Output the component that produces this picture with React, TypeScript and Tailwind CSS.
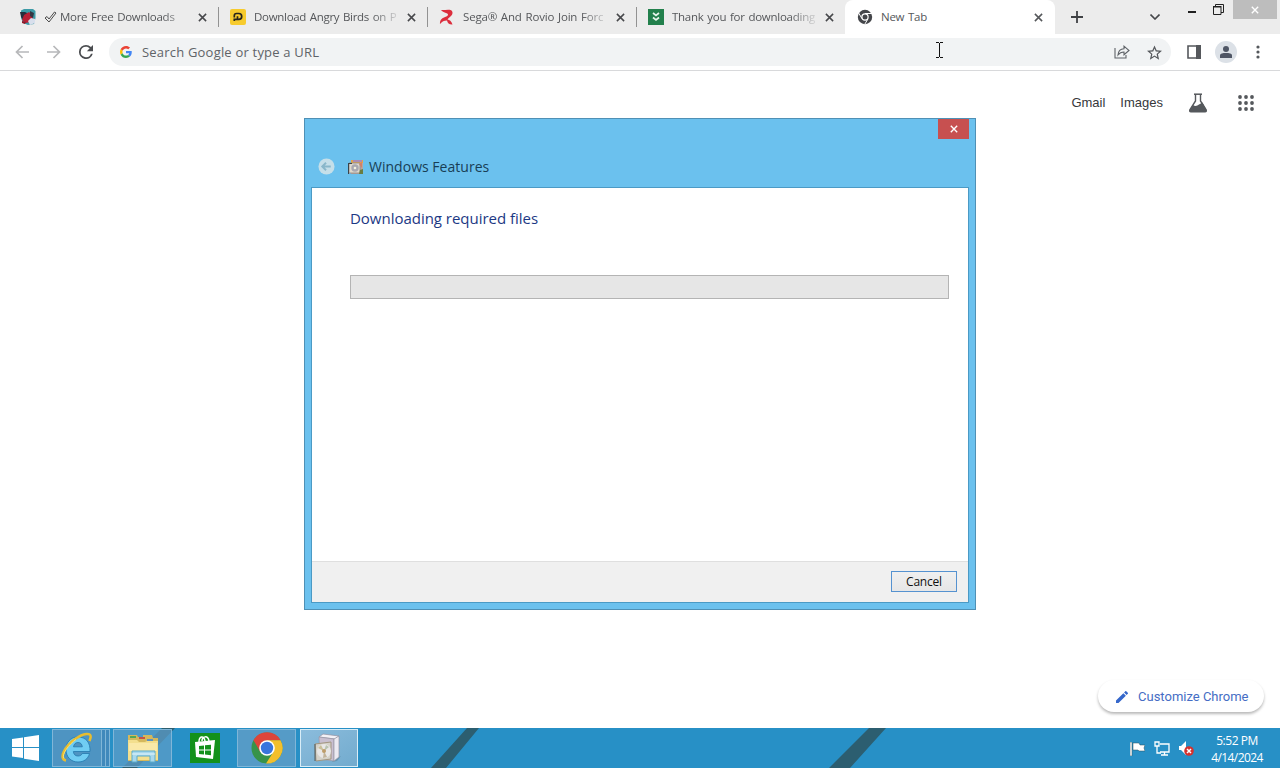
import type { ReactNode } from 'react'

const CloseIcon = ({ className }: { className?: string }) => (
  <svg viewBox="0 0 10 10" className={className} fill="none" stroke="currentColor" strokeWidth="1.7">
    <path d="M1 1l8 8M9 1L1 9" />
  </svg>
)

const BirdIcon = () => (
  <svg viewBox="0 0 16 16" className="-ml-px mr-px size-4">
    <path d="M1 1.500L4 0h9l2.500 2v7L14 15l-6 1-5-2-2-5z" fill="#3c9aa6" />
    <path d="M0 3l5 0 4 2-1 5-4 2-3-4z" fill="#262f3d" />
    <path d="M4 6l5-3 3 3 1 4-3 3-4 1-4-3z" fill="#b81f35" />
    <path d="M10 2l4 2-1 5-3-2z" fill="#343743" />
    <path d="M8 12l3-3 4 1v4l-5 2z" fill="#d8dfec" />
    <path d="M2 12l4 1-1 2-3-1z" fill="#8f1627" />
  </svg>
)

const PIcon = () => (
  <svg viewBox="0 0 16 16" className="size-4">
    <rect width="16" height="16" rx="2" fill="#f7cb2d" />
    <path d="M4.300 8.500V6.800a2.300 2.300 0 0 1 2.300-2.300h2.200a2.900 2.900 0 0 1 0 5.800H7M4.300 12V10.300H7.500V7.200" fill="none" stroke="#27251c" strokeWidth="1.700" />
  </svg>
)

const RovioIcon = () => (
  <svg viewBox="0 0 16 16" className="size-4">
    <path d="M2 1C6 1.500 13-1 13.500 3.500c.2 3-3 4.500-5 7 2.200.3 3.800 1.500 5 5-3.500.2-4.800-1.300-5.500-4C5 11.500 3 12.500 1 15c-.5-3.500 1.500-5.500 4-6.500C7.500 7.500 9 7 9 5.500 8.500 3.500 4.500 4 2 1z" fill="#dc2e3d" />
  </svg>
)

const GreenIcon = () => (
  <svg viewBox="0 0 16 16" className="size-4">
    <rect width="16" height="16" fill="#22804c" />
    <path d="M5 4l3 2.500L11 4M5 8.500L8 11l3-2.500" fill="none" stroke="#e7f5ec" strokeWidth="1.700" />
  </svg>
)

const ChromeMono = () => (
  <svg viewBox="0 0 16 16" className="size-4">
    <circle cx="8" cy="8" r="7.200" fill="#44464a" />
    <circle cx="8" cy="8" r="3.700" fill="#fff" />
    <path d="M8 4.500h7M5 9.700L1.600 3.900M11 9.800L7.700 15.400" stroke="#fff" strokeWidth="1" />
    <circle cx="8" cy="8" r="2.500" fill="#44464a" />
  </svg>
)

const tabs: { icon: ReactNode; title: string; className: string; check?: boolean }[] = [
  { icon: <BirdIcon />, title: 'More Free Downloads', className: 'tracking-[-0.280px]', check: true },
  { icon: <PIcon />, title: 'Download Angry Birds on P', className: 'tracking-[-0.300px]' },
  { icon: <RovioIcon />, title: 'Sega® And Rovio Join Forc', className: 'tracking-[-0.180px]' },
  { icon: <GreenIcon />, title: 'Thank you for downloading', className: 'tracking-[-0.260px]' },
]

function TabStrip() {
  return (
    <div className="flex h-[34px] bg-[#ececec] pl-[10px]">
      {tabs.map((tab, i) => (
        <div key={tab.title} className={`flex shrink-0 items-center pl-[11px] ${i === 3 ? 'w-[208px]' : 'w-[209px]'}`}>
          <span className="shrink-0">{tab.icon}</span>
          <div className="ml-2 flex w-[144px] shrink-0 items-center [mask-image:linear-gradient(to_right,black_118px,transparent_148px)]">
            {tab.check && (
              <svg viewBox="0 0 13 12" className="mr-[3px] -ml-px h-3 w-[13px] shrink-0" fill="none" stroke="#4b4b4b" strokeWidth="1">
                <path d="M1 7l2-1.500 2 2.500L10.500 1l1.500 1-7 9z" />
              </svg>
            )}
            <span className={`text-[11.5px] leading-[18px] [word-spacing:1px] whitespace-nowrap text-[#55575a] ${tab.className}`}>{tab.title}</span>
          </div>
          <CloseIcon className="ml-[9px] size-[9px] shrink-0 text-[#47484b]" />
          {i < 3 && <div className="ml-auto h-5 w-px bg-[#929292]" />}
        </div>
      ))}
      <div className="flex w-[210px] shrink-0 items-center rounded-t-lg bg-white pl-3">
        <ChromeMono />
        <span className="ml-2 w-[153px] text-[11.5px] leading-[18px] tracking-[-0.260px] text-[#55575a] [word-spacing:1px]">New Tab</span>
        <CloseIcon className="size-[9px] text-[#55575a]" />
      </div>
      <svg viewBox="0 0 12 12" className="mt-[11px] ml-4 size-3 shrink-0" stroke="#3f4144" strokeWidth="1.800">
        <path d="M6 0v12M0 6h12" />
      </svg>
      <svg viewBox="0 0 10 6" className="mt-[14px] ml-[67px] h-1.5 w-2.5 shrink-0" fill="none" stroke="#45474a" strokeWidth="1.600">
        <path d="M.5.5L5 5 9.500.5" />
      </svg>
      <div className="mt-[11px] ml-7 h-0.5 w-2 shrink-0 bg-[#202020]" />
      <svg viewBox="0 0 11 11" className="mt-[4px] ml-[17px] size-[11px] shrink-0" fill="none" stroke="#202020">
        <path d="M.5 3h7.500v7.500H.5zM2.500 3V.5h8v8H8" />
        <path d="M0 2.500h8.500" />
      </svg>
      <div className="ml-[9px] flex h-[19px] w-[44px] shrink-0 items-center justify-center bg-[#bdbdbd]">
        <CloseIcon className="size-[8px] text-white" />
      </div>
    </div>
  )
}

const Arrow = ({ className }: { className?: string }) => (
  <svg viewBox="0 0 14 14" className={`size-[14px] shrink-0 ${className ?? ''}`} fill="none" stroke="#b7b8ba" strokeWidth="1.700">
    <path d="M14 7H1.500M7.500 1L1.500 7l6 6" />
  </svg>
)

function Toolbar() {
  return (
    <div className="flex h-[37px] items-center border-b border-[#d8d9db] bg-white pl-[15px]">
      <Arrow />
      <Arrow className="ml-[18px] rotate-180" />
      <svg viewBox="4 4 16 16" className="ml-[18px] size-[14px] shrink-0" fill="#4b4d50">
        <path d="M17.650 6.350A7.960 7.960 0 0 0 12 4a8 8 0 1 0 7.730 10h-2.080A6 6 0 1 1 12 6c1.660 0 3.140.69 4.220 1.780L13 11h7V4z" />
      </svg>
      <div className="ml-4 flex h-7 w-[1062px] shrink-0 items-center rounded-full bg-[#f1f3f4] pl-[11px]">
        <svg viewBox="0 0 48 48" className="size-3 shrink-0">
          <path fill="#EA4335" d="M24 9.500c3.540 0 6.710 1.220 9.210 3.600l6.850-6.850C35.900 2.380 30.470 0 24 0 14.620 0 6.510 5.380 2.560 13.220l7.980 6.190C12.430 13.720 17.740 9.500 24 9.500z" />
          <path fill="#4285F4" d="M46.980 24.550c0-1.570-.15-3.090-.38-4.550H24v9.020h12.940c-.58 2.960-2.260 5.480-4.780 7.180l7.730 6c4.510-4.180 7.090-10.360 7.090-17.650z" />
          <path fill="#FBBC05" d="M10.530 28.590A14.500 14.500 0 0 1 9.770 24c0-1.600.27-3.140.76-4.590l-7.980-6.190A23.900 23.900 0 0 0 0 24c0 3.880.92 7.540 2.560 10.780z" />
          <path fill="#34A853" d="M24 48c6.480 0 11.930-2.130 15.890-5.810l-7.730-6c-2.150 1.450-4.920 2.300-8.160 2.300-6.260 0-11.570-4.220-13.470-9.910l-7.980 6.190C6.510 42.620 14.620 48 24 48z" />
        </svg>
        <span className="ml-[10px] grow pt-0.5 text-[13px] tracking-[0.200px] whitespace-nowrap text-[#5f6368]">Search Google or type a URL</span>
        <svg viewBox="0 0 16 14" className="mr-[17px] h-[14px] w-4" fill="none" stroke="#5f6368" strokeWidth="1.100">
          <path d="M1 3v10h11v-3" />
          <path d="M4 10c.3-4 2.500-6 6-6.200V1.200L15 5.500l-5 4.200V7C7.500 7 5.500 8 4 10z" />
        </svg>
        <svg viewBox="2 2 20 19" className="mr-[9px] size-[15px]" fill="#55585c">
          <path d="M22 9.240l-7.190-.62L12 2 9.190 8.630 2 9.240l5.460 4.730L5.820 21 12 17.270 18.180 21l-1.630-7.030zM12 15.400l-3.760 2.270 1-4.280-3.320-2.880 4.380-.38L12 6.100l1.710 4.040 4.380.38-3.320 2.880 1 4.280z" />
        </svg>
      </div>
      <svg viewBox="0 0 14 14" className="ml-[16px] size-[14px] shrink-0">
        <path d="M1 1h12v12H1z" fill="none" stroke="#55585c" strokeWidth="1.600" />
        <path d="M9 0h5v14H9z" fill="#55585c" />
      </svg>
      <div className="ml-[14px] flex size-[22px] shrink-0 items-center justify-center rounded-full bg-[#dce1e7]">
        <svg viewBox="0 0 12 12" className="size-3" fill="#4f5665">
          <circle cx="6" cy="3" r="3" />
          <path d="M0 12V9.500C0 7.500 3 7 6 7s6 .5 6 2.500V12z" />
        </svg>
      </div>
      <svg viewBox="0 0 4 14" className="ml-[19px] h-[14px] w-1 shrink-0" fill="#55585c">
        <circle cx="2" cy="2" r="1.600" />
        <circle cx="2" cy="7" r="1.600" />
        <circle cx="2" cy="12" r="1.600" />
      </svg>
    </div>
  )
}

function FeaturesDialog() {
  return (
    <div className="flex h-[492px] w-[672px] flex-col border border-[#4f90b5] bg-[#6bc1ee] px-1.5 pb-1.5">
      <div className="flex h-5 justify-end">
        <button className="flex w-[31px] items-center justify-center bg-[#c75050]">
          <CloseIcon className="size-[8px] text-white" />
        </button>
      </div>
      <div className="flex h-[48px] items-center pt-[7px] pl-[7px]">
        <svg viewBox="0 0 18 18" className="size-[17px]">
          <circle cx="9" cy="9" r="8.500" fill="#c5dfe9" />
          <path d="M13.500 9H5M8.500 5L4.500 9l4 4" fill="none" stroke="#89b7ca" strokeWidth="2" />
        </svg>
        <svg viewBox="0 0 16 16" className="ml-[13px] size-4">
          <path d="M3 1h12v14H3z" fill="#b9a6a0" />
          <path d="M3 1h12v3H3z" fill="#e2a54d" />
          <path d="M5 1h9v2H5z" fill="#a98cb6" />
          <path d="M1 4h11v10H1z" fill="#ded8cc" stroke="#8c8683" strokeWidth=".8" />
          <circle cx="7" cy="9" r="3.700" fill="#a8a8b1" />
          <circle cx="7" cy="9" r="1.300" fill="#f5f1df" />
          <path d="M.5 4v11M0 4.500h4" stroke="#39434b" />
          <path d="M12 11l3-1v5h-4z" fill="#697c42" />
          <path d="M11 5l3-2v6z" fill="#d38068" />
        </svg>
        <span className="ml-[5px] whitespace-nowrap text-[14px] tracking-[0.020px] text-[#183e55]">Windows Features</span>
      </div>
      <div className="flex grow flex-col border border-[#4b9ac5] bg-white">
        <div className="grow pt-[19px] pr-[19px] pl-[38px]">
          <h1 className="whitespace-nowrap text-[15px] leading-[22px] tracking-[-0.020px] text-[#1c3884]">Downloading required files</h1>
          <div className="mt-[46px] h-6 border border-[#b4b4b4] bg-[#e6e6e6]" />
        </div>
        <div className="flex h-[41px] items-start justify-end border-t border-[#dfdfdf] bg-[#f0f0f0] pt-[9px] pr-[11px]">
          <button className="h-[21px] w-[66px] border border-[#5592d0] bg-gradient-to-b from-[#f0f0f0] to-[#e6e6e6] text-[12px] leading-[19px] tracking-[-0.200px] text-[#111]">
            Cancel
          </button>
        </div>
      </div>
    </div>
  )
}

function NewTabPage() {
  return (
    <main className="relative flex h-[657px] flex-col items-end justify-between bg-white">
      <nav className="flex items-center pt-[22px] pr-[26px] font-['Liberation_Sans'] text-[13px] text-[#36383b]">
        <span>Gmail</span>
        <span className="ml-[15px]">Images</span>
        <svg viewBox="0 0 20 20" className="ml-[25px] size-5">
          <path d="M6 1.200h8" stroke="#55585c" strokeWidth="1.500" />
          <path d="M7.500 1v7L2 16.500Q1 18.800 3 18.800h14q2 0 1-2.300L12.500 8V1" fill="none" stroke="#55585c" strokeWidth="1.400" />
          <path d="M5 12q3 2 6-.5l3.500-2 4 7.500-.5 2H2l-.5-2z" fill="#55585c" />
        </svg>
        <svg viewBox="0 0 16 16" className="ml-[30px] size-4" fill="#55585c">
          {[2, 8, 14].map((y) => [2, 8, 14].map((x) => <circle key={`${x}-${y}`} cx={x} cy={y} r="1.900" />))}
        </svg>
      </nav>
      <button className="mr-4 mb-4 flex h-8 w-[166px] items-center rounded-full bg-white pt-px pl-[18px] font-[Roboto] text-[13px] text-[#456dc4] shadow-[0_2px_3px_rgba(0,0,0,0.28)]">
        <svg viewBox="3 3 18 18" className="size-3" fill="#3567cb">
          <path d="M3 17.250V21h3.750L17.810 9.940l-3.750-3.750zM20.710 7.040a1 1 0 0 0 0-1.410l-2.340-2.340a1 1 0 0 0-1.410 0l-1.830 1.830 3.750 3.750z" />
        </svg>
        <span className="ml-[10px] whitespace-nowrap">Customize Chrome</span>
      </button>
      <div className="absolute top-[47px] left-[304px]">
        <FeaturesDialog />
      </div>
    </main>
  )
}

function Taskbar() {
  return (
    <footer className="relative flex h-10 bg-[#2790c6]">
      <svg viewBox="0 0 1280 40" className="absolute inset-0 h-10 w-full">
        <path d="M162 0h13l-38 40h-15zM467 0h12l-33 40h-15zM869 0h17l-36 40h-21z" fill="#2c5e70" />
      </svg>
      <div className="relative flex w-full items-center">
        <svg viewBox="0 0 27 26" className="ml-3 h-[26px] w-[27px] shrink-0" fill="#fff">
          <path d="M0 4l11-1.500V12H0zM12 2.300L27 0v12H12zM0 13h11v10L0 21.500zM12 13h15v13l-15-2.300z" />
        </svg>
        {/* stacked Internet Explorer windows */}
        <div className="ml-[13px] flex h-[38px] w-[58px] shrink-0">
          <div className="flex w-[50px] items-center justify-center border border-[#80b6d8] bg-[#4e94c2]">
            <svg viewBox="0 0 32 32" className="size-8">
              <path fillRule="evenodd" d="M17 5C9 5 5 11 5 17.500 5 25 10 30 17 30c6 0 10-3 11.500-8.500h-7.300c-.7 1.800-2.200 2.500-4.200 2.500-2.800 0-4.400-1.700-4.600-4.500H29C29.500 10.500 25 5 17 5zM12.500 14.800c.5-2.800 2-4.300 4.500-4.300s4 1.500 4.300 4.300z" fill="#70cdf3" stroke="#2379ad" strokeWidth=".8" />
              <path d="M5 28.500C-3 27 4 14 14 7 22 1.500 31-.5 29.500 6l-1 3" fill="none" stroke="#e8bd30" strokeWidth="2.500" />
              <path d="M3 26.500C0 23 8 12 15 7.500" fill="none" stroke="#ffe36f" strokeWidth="1" />
            </svg>
          </div>
          <div className="w-1 border border-l-0 border-[#80b6d8] bg-[#4089bc]" />
          <div className="w-1 border border-l-0 border-[#80b6d8] bg-[#4089bc]" />
        </div>
        <div className="ml-[3px] flex h-[38px] w-[59px] shrink-0 items-center justify-center border border-[#80b6d8] bg-[#5c9cc7]/75">
          <svg viewBox="0 0 34 30" className="h-[30px] w-[34px]">
            <path d="M2 5V2h9l1 2h5V2h9l1 3h5v23H2z" fill="#d5b85c" />
            <path d="M4 3h6v2H4z" fill="#54a758" />
            <path d="M13 4h6v2h-6z" fill="#c55248" />
            <path d="M21 6h6v2h-6z" fill="#5b91c3" />
            <path d="M2 7h9l2 2h6l2-1h11v19H2z" fill="#f3df8e" />
            <path d="M3 10h28v8H3z" fill="#fae9a8" />
            <path d="M6 29V18h23v11h-5v-6H11v6z" fill="#a8d8ed" stroke="#5babc9" />
            <path d="M6 21h23" stroke="#e4f6fc" />
          </svg>
        </div>
        <svg viewBox="0 0 30 30" className="ml-[18px] size-[30px] shrink-0">
          <path d="M0 0h30v30H0z" fill="#13911b" />
          <path d="M9 9C9 3 14 2 15 8M12 8c0-5 6-6 7 0" fill="none" stroke="#fff" strokeWidth="1.500" />
          <path d="M5 9l20-2-2 19-17-2z" fill="#fff" />
          <path d="M9 13l5-.5v4H9zM15 12.300l6-.6v4.800h-6zM9 17.500h5v4l-5-.5zM15 17.500h6v4.800l-6-.7z" fill="#13911b" />
        </svg>
        <div className="ml-[17px] flex h-[38px] w-[59px] shrink-0 items-center justify-center border border-[#80b6d8] bg-[#559bc7]">
          <svg viewBox="0 0 32 32" className="size-8">
            <circle cx="16" cy="16" r="15.500" fill="#37934a" />
            <path d="M2.500 8.250A15.500 15.500 0 0 1 29.500 8.250L16 8.500 9.300 20z" fill="#dd453b" />
            <path d="M29.500 8.250A15.500 15.500 0 0 1 15 31.500l7.700-12L16 8.250z" fill="#f3bf2c" />
            <circle cx="16" cy="16" r="7.800" fill="#fff" />
            <circle cx="16" cy="16" r="6.200" fill="#3875dd" />
          </svg>
        </div>
        <div className="ml-[4px] flex h-[38px] w-[58px] shrink-0 items-center justify-center border border-[#d9edf7] bg-gradient-to-br from-[#8bbcdc] to-[#72abce]">
          <svg viewBox="0 0 28 30" className="mr-0.5 h-[30px] w-7">
            <path d="M20 26l7-3-4 5-5 1z" fill="#476d84" opacity=".4" />
            <path d="M5 4l4-3 16 2-4 3z" fill="#f3f1f6" stroke="#9190a0" strokeWidth=".7" />
            <path d="M5 4l15 2v22L6 26z" fill="#c8bfd0" stroke="#9c98a5" strokeWidth=".7" />
            <path d="M20 6l5-3v21l-5 4z" fill="#eceaf1" stroke="#9595a3" strokeWidth=".7" />
            <path d="M1 11l16-2v17L2 28z" fill="#d5d2c9" stroke="#a39680" />
            <circle cx="10" cy="18" r="7" fill="#e9e7e6" />
            <path d="M10 18L4 15l3-3z" fill="#c9c09b" />
            <path d="M10 18l2-6 3 2z" fill="#b9c3b0" />
            <path d="M10 18l3 6-4 1z" fill="#c2b49b" />
            <circle cx="10" cy="18" r="2" fill="#bd9c6a" />
            <path d="M1 11v17" stroke="#535a5b" />
          </svg>
        </div>
        <div className="ml-auto flex items-center pt-px">
          <svg viewBox="0 0 15 14" className="h-[14px] w-[15px]" fill="#fff" stroke="#284c5b" strokeWidth=".5">
            <path d="M0 0h2v14H0zM3 1h6l1 2h5l-1 3 1 3H9L8 8H3z" />
          </svg>
          <svg viewBox="0 0 16 15" className="ml-[9px] h-[15px] w-4" fill="none" stroke="#fff" strokeWidth="1.300">
            <path d="M6 3h9v8H6M10.500 11v3M7 14h7" />
            <path d="M1 1h4v4H1zM3 5v7h4" />
          </svg>
          <svg viewBox="0 0 16 15" className="ml-[9px] h-[15px] w-4">
            <path d="M0 5h2l5-5v14L2 9H0z" fill="#fff" />
            <circle cx="10" cy="10" r="4.800" fill="#d4322f" />
            <path d="M8 8l4 4M12 8l-4 4" stroke="#fff" strokeWidth="1.500" />
          </svg>
        </div>
        <div className="mr-4 ml-[15px] w-[54px] shrink-0 pt-[2px] text-center text-[12px] leading-[17px] whitespace-nowrap text-white">
          <p className="tracking-[-0.450px]">5:52 PM</p>
          <p className="-mx-2 tracking-[-0.600px]">4/14/2024</p>
        </div>
      </div>
    </footer>
  )
}

export default function App() {
  return (
    <div className="relative h-[768px] w-[1280px] overflow-hidden bg-white font-['Open_Sans','Noto_Sans',sans-serif]">
      <TabStrip />
      <Toolbar />
      <NewTabPage />
      <Taskbar />
      {/* text cursor resting over the address bar */}
      <svg viewBox="0 0 7 16" className="absolute top-[42px] left-[936px] h-4 w-[7px]" fill="none" stroke="#111">
        <path d="M0 .5h3M4 .5h3M3.500 1v14M0 15.500h3M4 15.500h3" />
      </svg>
    </div>
  )
}
